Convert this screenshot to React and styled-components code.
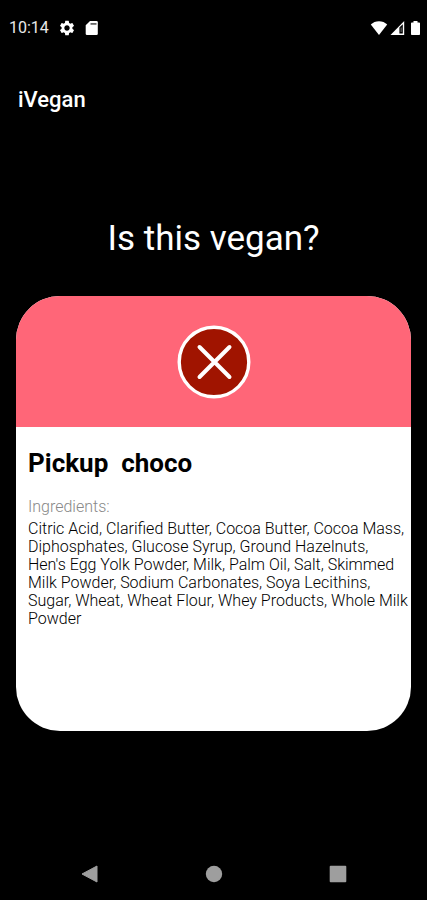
import React from "react";
import styled, { createGlobalStyle } from "styled-components";
import { MdSettings } from "react-icons/md";

const product = {
  name: "Pickup  choco",
  ingredients: [
    "Citric Acid",
    "Clarified Butter",
    "Cocoa Butter",
    "Cocoa Mass",
    "Diphosphates",
    "Glucose Syrup",
    "Ground Hazelnuts",
    "Hen's Egg Yolk Powder",
    "Milk",
    "Palm Oil",
    "Salt",
    "Skimmed Milk Powder",
    "Sodium Carbonates",
    "Soya Lecithins",
    "Sugar",
    "Wheat",
    "Wheat Flour",
    "Whey Products",
    "Whole Milk Powder",
  ],
};

export default function App() {
  return (
    <>
      <GlobalStyle />
      <Screen>
        <StatusBar>
          <StatusGroup $gap="9px">
            <Clock>10:14</Clock>
            <MdSettings size={18} />
            <SdCardIcon />
          </StatusGroup>
          <StatusGroup $gap="2px">
            <WifiIcon />
            <SignalIcon />
            <BatteryIcon />
          </StatusGroup>
        </StatusBar>
        <AppBar>
          <AppName>iVegan</AppName>
        </AppBar>
        <Main>
          <Question>Is this vegan?</Question>
          <Card>
            <Verdict>
              <NotVeganIcon />
            </Verdict>
            <Details>
              <ProductName>{product.name}</ProductName>
              <Label>Ingredients:</Label>
              <Ingredients>{product.ingredients.join(", ")}</Ingredients>
            </Details>
          </Card>
        </Main>
        <NavBar>
          <NavButton aria-label="Back">
            <svg width="18" height="18" viewBox="0 0 18 18">
              <path d="M1 9 16 1v16z" fill="currentColor" stroke="currentColor" strokeLinejoin="round" />
            </svg>
          </NavButton>
          <NavButton aria-label="Home">
            <svg width="18" height="18" viewBox="0 0 18 18">
              <circle cx="9" cy="9" r="8.2" fill="currentColor" />
            </svg>
          </NavButton>
          <NavButton aria-label="Recent apps">
            <svg width="18" height="18" viewBox="0 0 18 18">
              <rect x="0.7" y="0.7" width="16.6" height="16.6" rx="1" fill="currentColor" />
            </svg>
          </NavButton>
        </NavBar>
      </Screen>
    </>
  );
}

function SdCardIcon() {
  return (
    <svg width="14" height="16" viewBox="0 0 14 16">
      <path d="M5 1h6.500a1.300 1.300 0 0 1 1.300 1.300v11.400a1.300 1.300 0 0 1-1.300 1.300H2A1.300 1.300 0 0 1 .7 13.700V5.300z" fill="#fff" />
      <path d="M5.500 3h6v1.800h-6z" fill="#666" />
    </svg>
  );
}

function WifiIcon() {
  return (
    <svg width="18" height="16" viewBox="0 0 18 16">
      <path d="M9 15 .8 4.600C3 2.300 5.800 1.200 9 1.200s6 1.100 8.200 3.400z" fill="#fff" />
    </svg>
  );
}

function SignalIcon() {
  return (
    <svg width="15" height="16" viewBox="0 0 15 16">
      <path d="M14.200 1v14H.5z" fill="#fff" />
      <path d="M9.400 7.400 12.800 4.200v9.200H9.400z" fill="#000" />
      <path d="M10.700 7.600h.8v4.400h-.8z" fill="#888" />
    </svg>
  );
}

function BatteryIcon() {
  return (
    <svg width="16" height="16" viewBox="0 0 16 16">
      <path d="M6.500 1h4v1.400h1.700c.5 0 .8.3.8.8v11c0 .5-.3.8-.8.8H4.800c-.5 0-.8-.3-.8-.8v-11c0-.5.3-.8.8-.8h1.700z" fill="#fff" />
    </svg>
  );
}

function NotVeganIcon() {
  return (
    <svg width="74" height="74" viewBox="0 0 74 74" role="img" aria-label="Not vegan">
      <circle cx="37" cy="37" r="34.800" fill="#a01400" stroke="#fff" strokeWidth="3.400" />
      <path d="M22.500 22 52.500 52M52.500 22 22.500 52" stroke="#fff" strokeWidth="4" strokeLinecap="round" />
    </svg>
  );
}

const GlobalStyle = createGlobalStyle`
  * {
    box-sizing: border-box;
  }
  body {
    margin: 0;
    background: #000;
    font-family: Roboto, sans-serif;
  }
  h1, h2, h3, p {
    margin: 0;
  }
`;

const Screen = styled.div`
  display: flex;
  flex-direction: column;
  min-height: 100vh;
  background: #000;
  color: #fff;
`;

const StatusBar = styled.div`
  display: flex;
  justify-content: space-between;
  align-items: center;
  height: 55px;
  padding: 0 4px 0 9px;
`;

const StatusGroup = styled.div`
  display: flex;
  align-items: center;
  gap: ${(props) => props.$gap};
`;

const Clock = styled.span`
  font-size: 16px;
  line-height: 20px;
  color: #e8e8e8;
`;

const AppBar = styled.header`
  display: flex;
  align-items: center;
  height: 90px;
  padding: 0 18px;
`;

const AppName = styled.h1`
  font-size: 22px;
  line-height: 28px;
  font-weight: 500;
`;

const Main = styled.main`
  display: flex;
  flex: 1;
  flex-direction: column;
  padding: 72px 16px 117px;
`;

const Question = styled.h2`
  font-size: 35px;
  line-height: 44px;
  font-weight: 400;
  text-align: center;
`;

const Card = styled.article`
  display: flex;
  flex: 1;
  flex-direction: column;
  margin-top: 35px;
  border-radius: 44px;
  overflow: hidden;
  background: #fff;
  color: #000;
`;

const Verdict = styled.div`
  display: flex;
  align-items: center;
  justify-content: center;
  height: 131px;
  background: #ff6678;
`;

const Details = styled.div`
  padding: 20px 2px 20px 12px;
`;

const ProductName = styled.h3`
  font-size: 26px;
  line-height: 32px;
  font-weight: 700;
  white-space: pre-wrap;
`;

const Label = styled.p`
  margin-top: 19px;
  font-size: 16px;
  line-height: 18px;
  font-weight: 300;
  color: #888;
`;

const Ingredients = styled.p`
  margin-top: 4px;
  font-size: 16px;
  line-height: 18px;
  font-weight: 300;
  color: #000;
`;

const NavBar = styled.nav`
  display: flex;
  justify-content: center;
  gap: 76px;
  height: 52px;
`;

const NavButton = styled.button`
  display: flex;
  align-items: center;
  justify-content: center;
  width: 48px;
  height: 52px;
  padding: 0;
  border: none;
  background: none;
  color: #9e9e9e;
  cursor: pointer;
`;
